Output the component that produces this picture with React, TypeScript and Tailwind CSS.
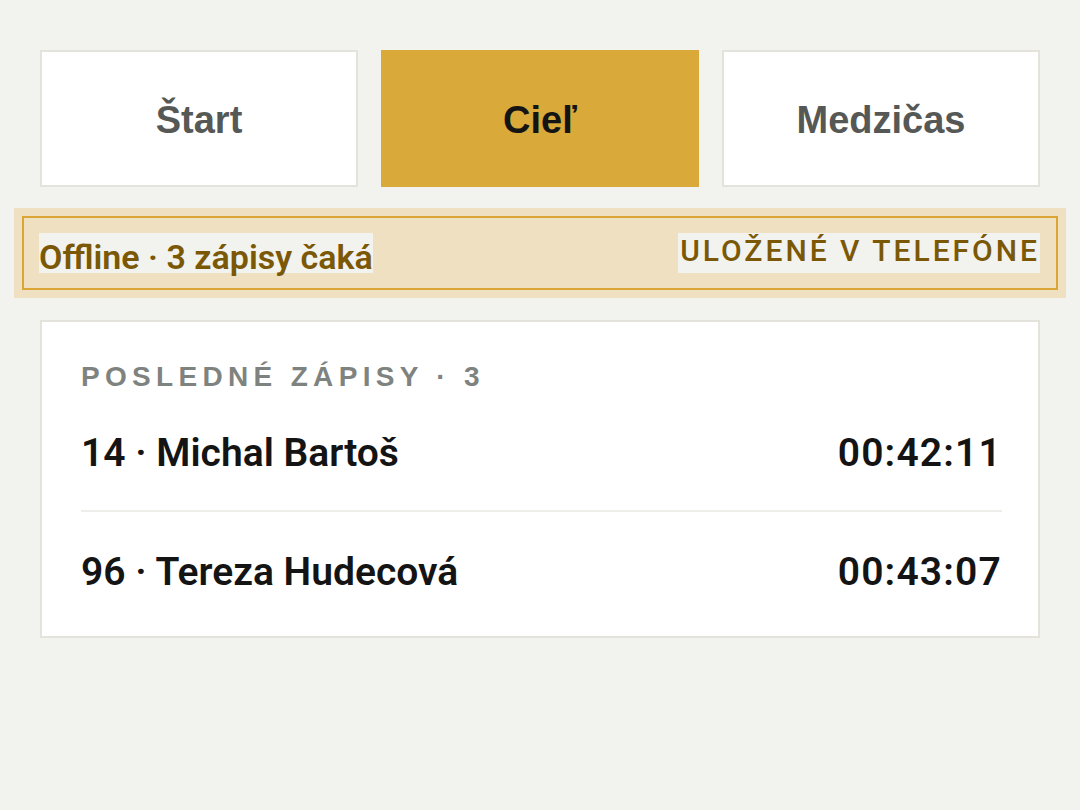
const tabs = [
  { label: 'Štart', active: false },
  { label: 'Cieľ', active: true },
  { label: 'Medzičas', active: false },
];

const entries = [
  { bib: 14, name: 'Michal Bartoš', time: '00:42:11' },
  { bib: 96, name: 'Tereza Hudecová', time: '00:43:07' },
];

const sans = "font-['Liberation_Sans',Arial,sans-serif]";
const ui = "font-['Roboto','Noto_Sans',sans-serif]";

export default function App() {
  return (
    <div className="min-h-[810px] bg-[#f2f2ee] px-10 pt-[50px]">
      <div className="grid grid-cols-3 gap-[23px]">
        {tabs.map((t) => (
          <button
            key={t.label}
            type="button"
            className={
              t.active
                ? `flex h-[137px] items-center justify-center border-2 border-[#d9a93a] bg-[#d9a93a] pt-[3px] text-[38px] font-bold text-[#141414] ${sans}`
                : `flex h-[137px] items-center justify-center border-2 border-[#e3e3dc] bg-white pt-[3px] text-[38px] font-bold text-[#555855] ${sans}`
            }
          >
            {t.label}
          </button>
        ))}
      </div>

      <div className="-mx-[26px] mt-[21px] bg-[#eee0c1] p-2">
        <div className={`flex items-start justify-between border-2 border-[#dba636] py-[15px] pl-[15px] pr-[16px] ${ui}`}>
          <span className="block h-10 bg-[#f2f2ee] pt-[8px] text-[34px] font-semibold leading-[32px] text-[#7a5806]">
            Offline · 3 zápisy čaká
          </span>
          <span className="block h-10 bg-[#f2f2ee] pb-[4px] pl-[2px] text-[30px] font-medium uppercase leading-[36px] tracking-[0.1em] text-[#7a5806]">
            Uložené v telefóne
          </span>
        </div>
      </div>

      <div className="mt-[22px] border-2 border-[#e3e3dc] bg-white pb-10 pl-[39px] pr-[36px] pt-[39px]">
        <div className={`mb-[36px] text-[28px] font-bold uppercase leading-[32px] tracking-[0.19em] text-[#7f837f] ${sans}`}>
          Posledné zápisy · 3
        </div>
        {entries.map((e, i) => (
          <div
            key={e.bib}
            className={
              i === 0
                ? `flex items-center justify-between border-b-2 border-[#eeeeea] pb-[33px] text-[39px] font-semibold leading-[48px] text-[#141414] ${ui}`
                : `flex items-center justify-between pt-[36px] text-[39px] font-semibold leading-[48px] text-[#141414] ${ui}`
            }
          >
            <span>
              {e.bib} · {e.name}
            </span>
            <span className="tracking-[0.03em]">{e.time}</span>
          </div>
        ))}
      </div>
    </div>
  );
}
